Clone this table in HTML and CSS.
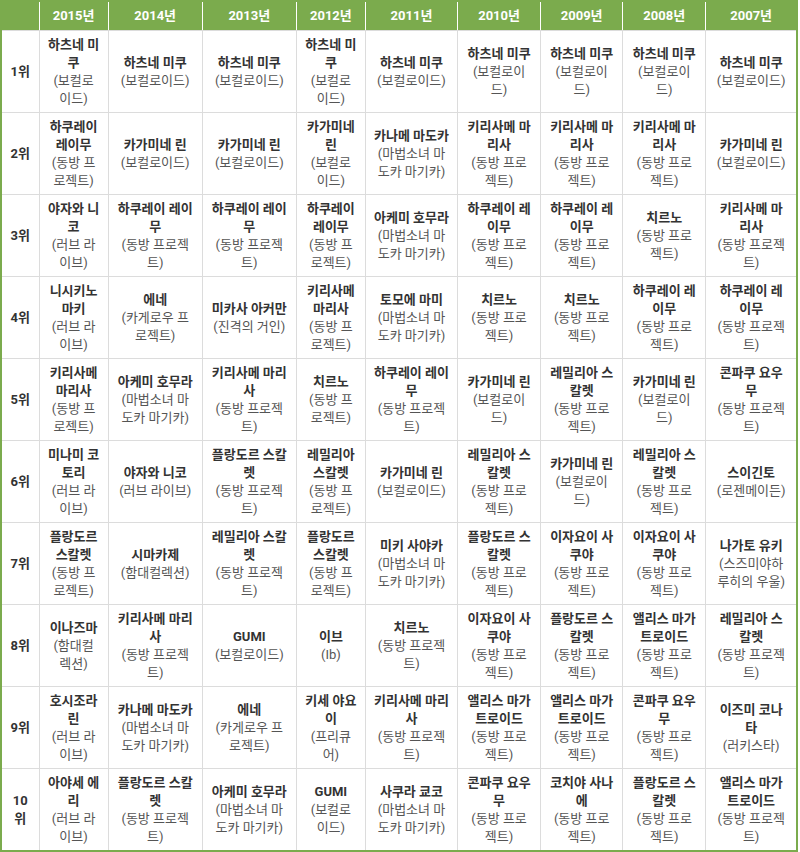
FILE: index.html
```html
<!DOCTYPE html>
<html lang="ko">
<head>
<meta charset="utf-8">
<title>캐릭터 인기 순위</title>
<link rel="stylesheet" href="styles.css">
</head>
<body>
<table class="rank-table">
  <colgroup>
    <col class="c-rank"><col class="c-2015"><col class="c-2014"><col class="c-2013"><col class="c-2012"><col class="c-2011"><col class="c-2010"><col class="c-2009"><col class="c-2008"><col class="c-2007">
  </colgroup>
  <thead>
    <tr><th></th><th>2015년</th><th>2014년</th><th>2013년</th><th>2012년</th><th>2011년</th><th>2010년</th><th>2009년</th><th>2008년</th><th>2007년</th></tr>
  </thead>
  <tbody>
    <tr><th class="rank">1위</th>
      <td><b>하츠네 미쿠</b><br><span class="src">(보컬로이드)</span></td>
      <td><b>하츠네 미쿠</b><br><span class="src">(보컬로이드)</span></td>
      <td><b>하츠네 미쿠</b><br><span class="src">(보컬로이드)</span></td>
      <td><b>하츠네 미쿠</b><br><span class="src">(보컬로이드)</span></td>
      <td><b>하츠네 미쿠</b><br><span class="src">(보컬로이드)</span></td>
      <td><b>하츠네 미쿠</b><br><span class="src">(보컬로이드)</span></td>
      <td><b>하츠네 미쿠</b><br><span class="src">(보컬로이드)</span></td>
      <td><b>하츠네 미쿠</b><br><span class="src">(보컬로이드)</span></td>
      <td><b>하츠네 미쿠</b><br><span class="src">(보컬로이드)</span></td>
    </tr>
    <tr><th class="rank">2위</th>
      <td><b>하쿠레이 레이무</b><br><span class="src">(동방 프로젝트)</span></td>
      <td><b>카가미네 린</b><br><span class="src">(보컬로이드)</span></td>
      <td><b>카가미네 린</b><br><span class="src">(보컬로이드)</span></td>
      <td><b>카가미네 린</b><br><span class="src">(보컬로이드)</span></td>
      <td><b>카나메 마도카</b><br><span class="src">(마법소녀 마도카 마기카)</span></td>
      <td><b>키리사메 마리사</b><br><span class="src">(동방 프로젝트)</span></td>
      <td><b>키리사메 마리사</b><br><span class="src">(동방 프로젝트)</span></td>
      <td><b>키리사메 마리사</b><br><span class="src">(동방 프로젝트)</span></td>
      <td><b>카가미네 린</b><br><span class="src">(보컬로이드)</span></td>
    </tr>
    <tr><th class="rank">3위</th>
      <td><b>야자와 니코</b><br><span class="src">(러브 라이브)</span></td>
      <td><b>하쿠레이 레이무</b><br><span class="src">(동방 프로젝트)</span></td>
      <td><b>하쿠레이 레이무</b><br><span class="src">(동방 프로젝트)</span></td>
      <td><b>하쿠레이 레이무</b><br><span class="src">(동방 프로젝트)</span></td>
      <td><b>아케미 호무라</b><br><span class="src">(마법소녀 마도카 마기카)</span></td>
      <td><b>하쿠레이 레이무</b><br><span class="src">(동방 프로젝트)</span></td>
      <td><b>하쿠레이 레이무</b><br><span class="src">(동방 프로젝트)</span></td>
      <td><b>치르노</b><br><span class="src">(동방 프로젝트)</span></td>
      <td><b>키리사메 마리사</b><br><span class="src">(동방 프로젝트)</span></td>
    </tr>
    <tr><th class="rank">4위</th>
      <td><b>니시키노 마키</b><br><span class="src">(러브 라이브)</span></td>
      <td><b>에네</b><br><span class="src">(카게로우 프로젝트)</span></td>
      <td><b>미카사 아커만</b><br><span class="src">(진격의 거인)</span></td>
      <td><b>키리사메 마리사</b><br><span class="src">(동방 프로젝트)</span></td>
      <td><b>토모에 마미</b><br><span class="src">(마법소녀 마도카 마기카)</span></td>
      <td><b>치르노</b><br><span class="src">(동방 프로젝트)</span></td>
      <td><b>치르노</b><br><span class="src">(동방 프로젝트)</span></td>
      <td><b>하쿠레이 레이무</b><br><span class="src">(동방 프로젝트)</span></td>
      <td><b>하쿠레이 레이무</b><br><span class="src">(동방 프로젝트)</span></td>
    </tr>
    <tr><th class="rank">5위</th>
      <td><b>키리사메 마리사</b><br><span class="src">(동방 프로젝트)</span></td>
      <td><b>아케미 호무라</b><br><span class="src">(마법소녀 마도카 마기카)</span></td>
      <td><b>키리사메 마리사</b><br><span class="src">(동방 프로젝트)</span></td>
      <td><b>치르노</b><br><span class="src">(동방 프로젝트)</span></td>
      <td><b>하쿠레이 레이무</b><br><span class="src">(동방 프로젝트)</span></td>
      <td><b>카가미네 린</b><br><span class="src">(보컬로이드)</span></td>
      <td><b>레밀리아 스칼렛</b><br><span class="src">(동방 프로젝트)</span></td>
      <td><b>카가미네 린</b><br><span class="src">(보컬로이드)</span></td>
      <td><b>콘파쿠 요우무</b><br><span class="src">(동방 프로젝트)</span></td>
    </tr>
    <tr><th class="rank">6위</th>
      <td><b>미나미 코토리</b><br><span class="src">(러브 라이브)</span></td>
      <td><b>야자와 니코</b><br><span class="src">(러브 라이브)</span></td>
      <td><b>플랑도르 스칼렛</b><br><span class="src">(동방 프로젝트)</span></td>
      <td><b>레밀리아 스칼렛</b><br><span class="src">(동방 프로젝트)</span></td>
      <td><b>카가미네 린</b><br><span class="src">(보컬로이드)</span></td>
      <td><b>레밀리아 스칼렛</b><br><span class="src">(동방 프로젝트)</span></td>
      <td><b>카가미네 린</b><br><span class="src">(보컬로이드)</span></td>
      <td><b>레밀리아 스칼렛</b><br><span class="src">(동방 프로젝트)</span></td>
      <td><b>스이긴토</b><br><span class="src">(로젠메이든)</span></td>
    </tr>
    <tr><th class="rank">7위</th>
      <td><b>플랑도르 스칼렛</b><br><span class="src">(동방 프로젝트)</span></td>
      <td><b>시마카제</b><br><span class="src">(함대컬렉션)</span></td>
      <td><b>레밀리아 스칼렛</b><br><span class="src">(동방 프로젝트)</span></td>
      <td><b>플랑도르 스칼렛</b><br><span class="src">(동방 프로젝트)</span></td>
      <td><b>미키 사야카</b><br><span class="src">(마법소녀 마도카 마기카)</span></td>
      <td><b>플랑도르 스칼렛</b><br><span class="src">(동방 프로젝트)</span></td>
      <td><b>이자요이 사쿠야</b><br><span class="src">(동방 프로젝트)</span></td>
      <td><b>이자요이 사쿠야</b><br><span class="src">(동방 프로젝트)</span></td>
      <td><b>나가토 유키</b><br><span class="src">(스즈미야하루히의 우울)</span></td>
    </tr>
    <tr><th class="rank">8위</th>
      <td><b>이나즈마</b><br><span class="src">(함대컬렉션)</span></td>
      <td><b>키리사메 마리사</b><br><span class="src">(동방 프로젝트)</span></td>
      <td><b>GUMI</b><br><span class="src">(보컬로이드)</span></td>
      <td><b>이브</b><br><span class="src">(Ib)</span></td>
      <td><b>치르노</b><br><span class="src">(동방 프로젝트)</span></td>
      <td><b>이자요이 사쿠야</b><br><span class="src">(동방 프로젝트)</span></td>
      <td><b>플랑도르 스칼렛</b><br><span class="src">(동방 프로젝트)</span></td>
      <td><b>앨리스 마가트로이드</b><br><span class="src">(동방 프로젝트)</span></td>
      <td><b>레밀리아 스칼렛</b><br><span class="src">(동방 프로젝트)</span></td>
    </tr>
    <tr><th class="rank">9위</th>
      <td><b>호시조라 린</b><br><span class="src">(러브 라이브)</span></td>
      <td><b>카나메 마도카</b><br><span class="src">(마법소녀 마도카 마기카)</span></td>
      <td><b>에네</b><br><span class="src">(카게로우 프로젝트)</span></td>
      <td><b>키세 야요이</b><br><span class="src">(프리큐어)</span></td>
      <td><b>키리사메 마리사</b><br><span class="src">(동방 프로젝트)</span></td>
      <td><b>앨리스 마가트로이드</b><br><span class="src">(동방 프로젝트)</span></td>
      <td><b>앨리스 마가트로이드</b><br><span class="src">(동방 프로젝트)</span></td>
      <td><b>콘파쿠 요우무</b><br><span class="src">(동방 프로젝트)</span></td>
      <td><b>이즈미 코나타</b><br><span class="src">(러키스타)</span></td>
    </tr>
    <tr><th class="rank">10위</th>
      <td><b>아야세 에리</b><br><span class="src">(러브 라이브)</span></td>
      <td><b>플랑도르 스칼렛</b><br><span class="src">(동방 프로젝트)</span></td>
      <td><b>아케미 호무라</b><br><span class="src">(마법소녀 마도카 마기카)</span></td>
      <td><b>GUMI</b><br><span class="src">(보컬로이드)</span></td>
      <td><b>사쿠라 쿄코</b><br><span class="src">(마법소녀 마도카 마기카)</span></td>
      <td><b>콘파쿠 요우무</b><br><span class="src">(동방 프로젝트)</span></td>
      <td><b>코치야 사나에</b><br><span class="src">(동방 프로젝트)</span></td>
      <td><b>플랑도르 스칼렛</b><br><span class="src">(동방 프로젝트)</span></td>
      <td><b>앨리스 마가트로이드</b><br><span class="src">(동방 프로젝트)</span></td>
    </tr>
  </tbody>
</table>
</body>
</html>
```

FILE: styles.css
```css
html, body {
  margin: 0;
  padding: 0;
  background: #ffffff;
}

.rank-table {
  width: 798px;
  table-layout: fixed;
  border-collapse: collapse;
  border: 2px solid #7bab4d;
  font-family: "Roboto", "Noto Sans CJK KR", sans-serif;
  font-size: 13px;
  line-height: 18px;
  color: #333333;
}

.c-rank { width: 38px; }
.c-2015 { width: 69px; }
.c-2014 { width: 94px; }
.c-2013 { width: 94px; }
.c-2012 { width: 69px; }
.c-2011 { width: 92px; }
.c-2010 { width: 83px; }
.c-2009 { width: 82px; }
.c-2008 { width: 83px; }
.c-2007 { width: 91px; }

.rank-table th,
.rank-table td {
  border: 1px solid #dcdcdc;
  padding: 4.5px 8px;
  text-align: center;
  vertical-align: middle;
}

.rank-table thead th {
  background: #7bab4d;
  color: #ffffff;
  font-weight: bold;
  border-color: #ffffff;
  border-top: none;
  border-bottom: 1px solid #dcdcdc;
  padding-top: 5px;
  padding-bottom: 5px;
}

.rank-table thead th:first-child { border-left: none; }
.rank-table thead th:last-child { border-right: none; }

.rank-table .rank {
  font-weight: bold;
  color: #333333;
}

.rank-table b {
  font-weight: bold;
  color: #333333;
}

.rank-table .src {
  color: #555555;
}
```
